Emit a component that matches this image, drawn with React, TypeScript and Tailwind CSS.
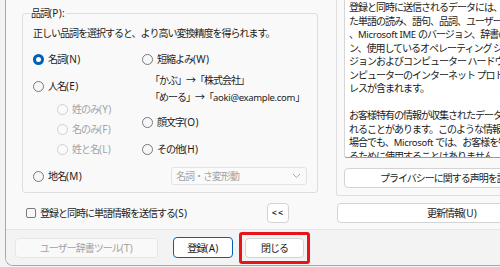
import React from "react";

type RState = "on" | "off" | "dis";

const J = ({ t }: { t: string }) => (
  <>
    {t.split(/([A-Za-z0-9@.()<>:][A-Za-z0-9@.()<>: ]*)/).map((p, i) =>
      i % 2 === 1 ? (
        p.length <= 4 ? (
          <span key={i} className="text-[10px] tracking-[0.3px]">
            {p}
          </span>
        ) : (
          <span key={i} className="text-[9.5px] tracking-[-0.3px]">
            {p}
          </span>
        )
      ) : (
        <React.Fragment key={i}>{p}</React.Fragment>
      )
    )}
  </>
);

const Radio = ({ state }: { state: RState }) => {
  if (state === "on")
    return (
      <span className="flex h-[11px] w-[11px] shrink-0 items-center justify-center rounded-full bg-[#005fb8]">
        <span className="h-[5px] w-[5px] rounded-full bg-white" />
      </span>
    );
  if (state === "dis")
    return <span className="h-[11px] w-[11px] shrink-0 rounded-full border border-[#cfcfcf] bg-[#fbfbfb]" />;
  return <span className="h-[11px] w-[11px] shrink-0 rounded-full border border-[#7a7a7a] bg-[#f7f7f7]" />;
};

const RadioItem = ({ state = "off", label, className = "" }: { state?: RState; label: string; className?: string }) => (
  <div className={"flex h-[14px] items-center gap-[4px] whitespace-nowrap " + className}>
    <Radio state={state} />
    <span className={state === "dis" ? "text-[#a3a3a3]" : ""}>
      <J t={label} />
    </span>
  </div>
);

const lines = [
  "登録と同時に送信されるデータには、登録し",
  "た単語の読み、語句、品詞、ユーザー コメント",
  "、Microsoft IME のバージョン、辞書のバージョ",
  "ン、使用しているオペレーティング システムのバー",
  "ジョンおよびコンピューター ハードウェアの種類、コ",
  "ンピューターのインターネット プロトコル (IP) アド",
  "レスが含まれます。",
  "\u00a0",
  "お客様特有の情報が収集されたデータに含ま",
  "れることがあります。このような情報が含まれる",
  "場合でも、Microsoft では、お客様を特定す",
  "るために使用することはありません。",
];

export default function App() {
  return (
    <div className="h-[267px] w-[500px] overflow-hidden bg-[#f3f3f3] font-['Noto_Sans','Noto_Sans_CJK_JP',sans-serif] text-[10px] leading-[14px] tracking-[-1px] text-[#1b1b1b]">
      <div className="ml-[5px] flex h-[266px] w-[560px] flex-col overflow-hidden rounded-bl-[8px] border-b border-l border-[#a9a9a9] bg-[#f9f9f9]">
        <div className="flex h-[229px] shrink-0">
          {/* left column */}
          <div className="ml-[16px] w-[296px] shrink-0">
            <div className="relative mt-[13px] h-[180px] rounded-[3px] border border-[#dedede] pl-[10px]">
              <span className="absolute -top-[8px] left-[7px] whitespace-nowrap bg-[#f9f9f9] px-[1px]">
                <J t="品詞(P):" />
              </span>
              <p className="mt-[12px] h-[14px] whitespace-nowrap">正しい品詞を選択すると、より高い変換精度を得られます。</p>
              <div className="mt-[12px] flex">
                <div className="flex w-[109px] shrink-0 flex-col">
                  <RadioItem state="on" label="名詞(N)" />
                  <RadioItem label="人名(E)" className="mt-[13px]" />
                  <RadioItem state="dis" label="姓のみ(Y)" className="ml-[24px] mt-[9px]" />
                  <RadioItem state="dis" label="名のみ(F)" className="ml-[24px] mt-[6px]" />
                  <RadioItem state="dis" label="姓と名(L)" className="ml-[24px] mt-[6px]" />
                </div>
                <div className="flex flex-col">
                  <RadioItem label="短縮よみ(W)" />
                  <div className="ml-[8px] mt-[7px] h-[14px] whitespace-nowrap">「かぶ」→「株式会社」</div>
                  <div className="ml-[8px] mt-[3px] h-[14px] whitespace-nowrap">
                    <J t="「めーる」→「aoki@example.com」" />
                  </div>
                  <RadioItem label="顔文字(O)" className="mt-[11px]" />
                  <RadioItem label="その他(H)" className="mt-[13px]" />
                </div>
              </div>
              <div className="mt-[11px] flex h-[18px] items-center">
                <div className="w-[109px] shrink-0">
                  <RadioItem label="地名(M)" />
                </div>
                <div className="ml-[29px] flex h-[18px] w-[136px] items-center justify-between rounded-[3px] border border-[#e3e3e3] bg-[#fafafa] pl-[4px] pr-[5px] text-[#a3a3a3]">
                  <span>名詞・さ変形動</span>
                  <svg width="9" height="6" viewBox="0 0 9 6" fill="none">
                    <path d="M1 1l3.5 3.5L8 1" stroke="#a8a8a8" strokeWidth="1" />
                  </svg>
                </div>
              </div>
            </div>
            <div className="mt-[10px] flex h-[20px] items-center justify-between pl-[4px] pr-[29px]">
              <div className="flex items-center gap-[4px] whitespace-nowrap">
                <span className="h-[10px] w-[10px] rounded-[2px] border border-[#7a7a7a] bg-[#f7f7f7]" />
                <span>
                  <J t="登録と同時に単語情報を送信する(S)" />
                </span>
              </div>
              <button className="flex h-[20px] w-[22px] items-center justify-center rounded-[4px] border border-[#d3d3d3] bg-white text-[9px] font-semibold tracking-[1px]">
                &lt;&lt;
              </button>
            </div>
          </div>
          {/* right column */}
          <div className="ml-[18px] w-[240px] shrink-0">
            <div className="h-[196px] rounded-bl-[3px] border-b border-l border-[#dedede] pl-[7px]">
              <div className="h-[158px] w-[300px] overflow-hidden rounded-b-[3px] border-x border-b border-[#d6d6d6] border-b-[#9a9a9a] bg-white pl-[4px] pt-[1px] leading-[13.5px]">
                {lines.map((l, i) => (
                  <div key={i} className="whitespace-nowrap">
                    <J t={l} />
                  </div>
                ))}
              </div>
              <button className="mt-[10px] flex h-[20px] w-[300px] items-center whitespace-nowrap rounded-[4px] border border-[#d3d3d3] bg-white pl-[35px]">
                <J t="プライバシーに関する声明を読む(R)" />
              </button>
            </div>
            <button className="ml-[1px] mt-[7px] flex h-[20px] w-[230px] items-center justify-center rounded-[4px] border border-[#d3d3d3] bg-white">
              <J t="更新情報(U)" />
            </button>
          </div>
        </div>
        {/* bottom bar */}
        <div className="flex flex-1 items-center border-t border-[#e5e5e5] bg-[#f3f3f3] pl-[9px]">
          <button className="flex h-[20px] w-[143px] items-center justify-center rounded-[4px] border border-[#e6e6e6] bg-[#f9f9f9] text-[#a3a3a3]">
            <J t="ユーザー辞書ツール(T)" />
          </button>
          <button className="ml-[15px] flex h-[21px] w-[60px] items-center justify-center rounded-[4px] border border-[#005fb8] bg-white">
            <J t="登録(A)" />
          </button>
          <div className="ml-[6px] rounded-[3px] border-[3px] border-[#e8141c] p-[3px]">
            <button className="flex h-[20px] w-[59px] items-center justify-center rounded-[4px] border border-[#d3d3d3] bg-white">
              閉じる
            </button>
          </div>
        </div>
      </div>
    </div>
  );
}
